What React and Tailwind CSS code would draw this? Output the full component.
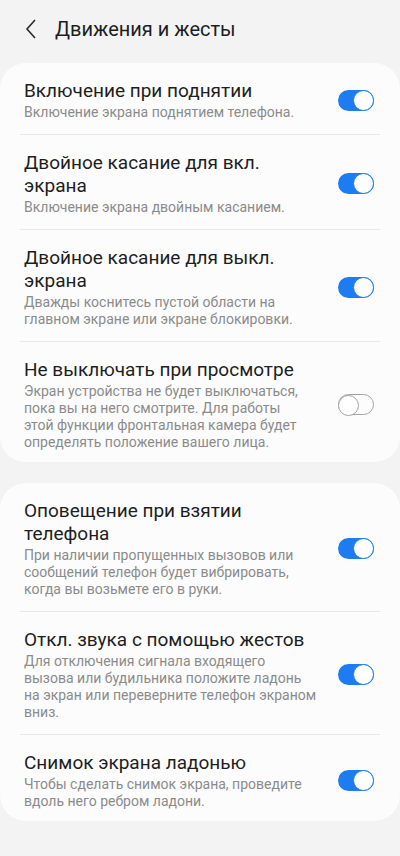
import { useState } from "react";

const groups = [
	[
		{
			title: "Включение при поднятии",
			desc: "Включение экрана поднятием телефона.",
			on: true,
		},
		{
			title: "Двойное касание для вкл. экрана",
			desc: "Включение экрана двойным касанием.",
			on: true,
		},
		{
			title: "Двойное касание для выкл. экрана",
			desc: "Дважды коснитесь пустой области на\nглавном экране или экране блокировки.",
			on: true,
		},
		{
			title: "Не выключать при просмотре",
			desc: "Экран устройства не будет выключаться,\nпока вы на него смотрите. Для работы\nэтой функции фронтальная камера будет\nопределять положение вашего лица.",
			on: false,
		},
	],
	[
		{
			title: "Оповещение при взятии телефона",
			desc: "При наличии пропущенных вызовов или\nсообщений телефон будет вибрировать,\nкогда вы возьмете его в руки.",
			on: true,
		},
		{
			title: "Откл. звука с помощью жестов",
			desc: "Для отключения сигнала входящего\nвызова или будильника положите ладонь\nна экран или переверните телефон экраном\nвниз.",
			on: true,
		},
		{
			title: "Снимок экрана ладонью",
			desc: "Чтобы сделать снимок экрана, проведите\nвдоль него ребром ладони.",
			on: true,
		},
	],
];

const Toggle = ({ on, onClick }) => (
	<button
		onClick={onClick}
		className={`relative shrink-0 w-[36px] h-[21px] rounded-full ${
			on ? "bg-[#1d7cf2]" : "border-[1.5px] border-[#a3a3a3]"
		}`}
	>
		<span
			className={`absolute top-0 w-[21px] h-[21px] rounded-full bg-white ${
				on ? "right-0 border-[1.5px] border-[#1d7cf2]" : "-left-[1.5px] -top-[1.5px] border-[1.5px] border-[#a3a3a3]"
			}`}
		/>
	</button>
);

const Item = ({ item, last, onToggle }) => (
	<div>
		<div className={`flex items-center pl-6 pr-[26px] pt-4 ${last ? "pb-[11px]" : "pb-[13px]"}`}>
			<div className="flex-1 pr-2">
				<div className="text-[19px] leading-[23px] text-[#1e1e1e] pr-2">{item.title}</div>
				<div className="mt-[2px] text-[14px] leading-[17px] text-[#8b8b8b] whitespace-pre-line">
					{item.desc}
				</div>
			</div>
			<Toggle on={item.on} onClick={onToggle} />
		</div>
		{!last && <div className="mx-5 h-px bg-[#e8e8e8]" />}
	</div>
);

const App = () => {
	const [state, setState] = useState(groups);

	const toggle = (g, i) => {
		setState((prev) =>
			prev.map((grp, gi) =>
				gi !== g ? grp : grp.map((it, ii) => (ii === i ? { ...it, on: !it.on } : it))
			)
		);
	};

	return (
		<div
			className="min-h-[856px] w-[400px] bg-[#f3f3f3] pb-8"
			style={{ fontFamily: "Roboto, 'Noto Sans', sans-serif" }}
		>
			<div className="flex items-center h-[58px]">
				<svg width="14" height="22" viewBox="0 0 14 22" className="ml-[24px]">
					<polyline points="11,2 3,11 11,20" fill="none" stroke="#2a2a2a" strokeWidth="1.6" />
				</svg>
				<div className="ml-[17px] text-[20px] text-[#1e1e1e]">Движения и жесты</div>
			</div>
			<div className="flex flex-col gap-[21px] pt-[5px]">
				{state.map((grp, g) => (
					<div key={g} className="bg-[#fcfcfc] rounded-[26px]">
						{grp.map((item, i) => (
							<Item
								key={i}
								item={item}
								last={i === grp.length - 1}
								onToggle={() => toggle(g, i)}
							/>
						))}
					</div>
				))}
			</div>
		</div>
	);
};

export default App;
